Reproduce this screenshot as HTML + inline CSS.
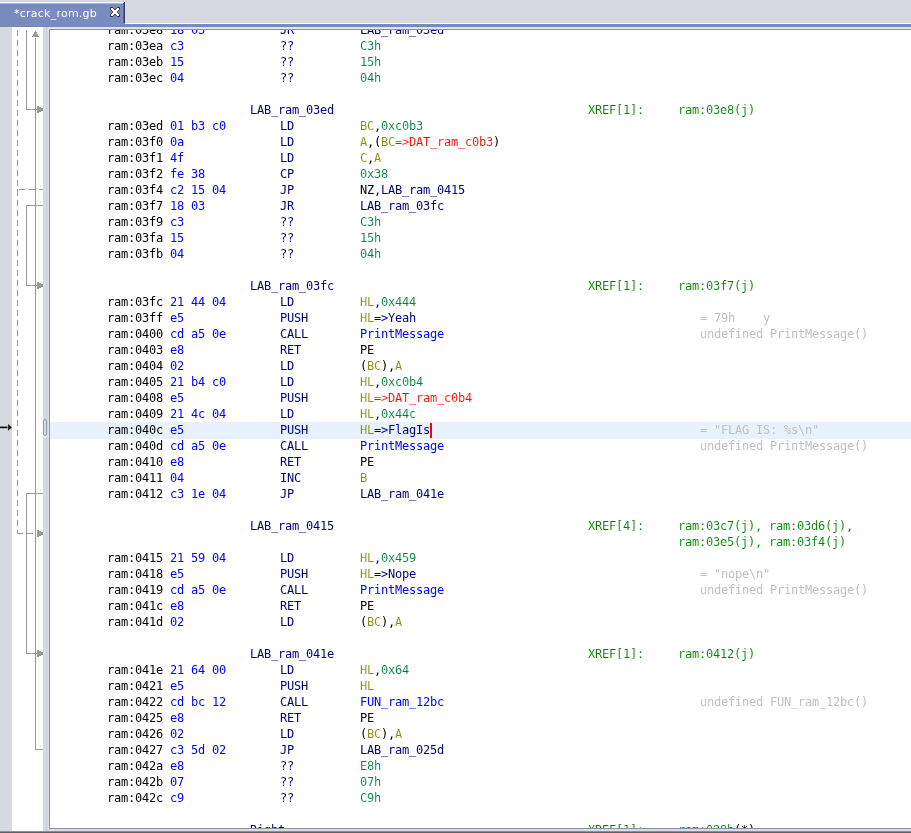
<!DOCTYPE html>
<html>
<head>
<meta charset="utf-8">
<title>crack_rom.gb</title>
<style>
html,body{margin:0;padding:0;}
body{width:911px;height:833px;overflow:hidden;background:#d6d9df;position:relative;font-family:"DejaVu Sans Mono","Liberation Mono",monospace;}
#tab{will-change:transform;position:absolute;left:0;top:2px;width:125px;height:25px;background:#7a8cbf;}
#tab .hi{position:absolute;left:0;top:0;width:124px;height:1px;background:#f3f7fe;}
#tab .hi2{position:absolute;left:0;top:1px;width:123px;height:1px;background:#a4baec;}
#tab .rb1{position:absolute;left:123px;top:1px;width:1px;height:20px;background:#596994;}
#tab .rb2{position:absolute;left:124px;top:0;width:1px;height:21px;background:#2e3a5c;}
#tab .t{position:absolute;left:14px;top:4px;font:11px/16px "DejaVu Sans","Liberation Sans",sans-serif;letter-spacing:0.24px;color:#fff;white-space:pre;}
#tabline-w{position:absolute;left:125px;top:23px;width:786px;height:1px;background:#fff;}
#tabline-b{position:absolute;left:0;top:24px;width:911px;height:3px;background:linear-gradient(to bottom,#7a8cbf 0,#7a8cbf 2px,#6f87bd 2px,#6f87bd 3px);}
#margin{position:absolute;left:12px;top:27px;width:31px;height:804px;background:#fff;}
#divider{position:absolute;left:43px;top:27px;width:6px;height:804px;background:linear-gradient(to right,#d4d7dd 0,#d4d7dd 1px,#d6d9df 1px,#d6d9df 3px,#cbced4 3px,#cbced4 4px,#d5d8de 4px,#d5d8de 5px,#dee0e6 5px,#dee0e6 6px);}
#topband{position:absolute;left:48px;top:27px;width:863px;height:2px;background:#e1e3e8;}
#botband{position:absolute;left:48px;top:829px;width:863px;height:3px;background:#d9dce2;}
#listing{will-change:transform;position:absolute;left:49px;top:29px;width:862px;height:798px;background:#fff;border-left:1px solid #8f94a2;border-top:1px solid #8d919e;border-bottom:1px solid #8d919e;overflow:hidden;}
#bottom{position:absolute;left:0;top:831px;width:911px;height:2px;background:linear-gradient(to bottom,#8b8e95 0,#8b8e95 1px,#5f6166 1px,#5f6166 2px);}
.row{position:absolute;left:0;width:861px;height:16px;font-size:12px;line-height:16px;letter-spacing:-0.224px;white-space:pre;}
.row.hl{background:#e8f2fe;height:17px;}
.c{position:absolute;top:0;}
.a{left:57px;color:#000;}
.b{left:120px;color:#00f;}
.m{left:230px;color:#000080;}
.o{left:310px;}
.lb{left:200px;color:#000080;}
.xh{left:538px;color:#008000;}
.xr{left:628px;}
.cm{left:650px;color:#c0c0c0;}
.r{color:#8c8c14;}
.r,.s,.e,.g,.xh{-webkit-text-stroke:0.1px #fff;}
.hl .r{-webkit-text-stroke-color:#e8f2fe;}
.s{color:#008040;}
.k{color:#000;}
.l{color:#000080;}
.f{color:#00f;}
.e{color:#f00;}
.g{color:#008000;}
.cur{position:absolute;left:380px;top:1px;width:2px;height:15px;background:#f00;}
</style>
</head>
<body>
<div id="tab"><div class="hi"></div><div class="hi2"></div><div class="rb1"></div><div class="rb2"></div><div class="t">*crack_rom.gb</div>
<svg style="position:absolute;left:110px;top:5px" width="10" height="10" viewBox="0 0 10 10"><path d="M0.5 0.5 L2.7 0.5 L5 2.9 L7.3 0.5 L9.5 0.5 L9.5 2.7 L7.1 5 L9.5 7.3 L9.5 9.5 L7.3 9.5 L5 7.1 L2.7 9.5 L0.5 9.5 L0.5 7.3 L2.9 5 L0.5 2.7 Z" fill="#fff" stroke="#2b2b2b" stroke-width="1" stroke-linejoin="miter"/></svg>
</div>
<div id="tabline-w"></div>
<div id="tabline-b"></div>
<div id="margin"></div>
<div id="divider"></div>
<div id="topband"></div>
<div id="botband"></div>
<svg id="flow" style="position:absolute;left:0;top:27px" width="50" height="806" viewBox="0 27 50 806" shape-rendering="crispEdges">
<g stroke="#999" stroke-width="1" fill="none">
<!-- dashed conditional jump 03f4 -> 0415 -->
<path d="M17.5 30 V533.5" stroke-dasharray="6 4"/>
<path d="M19 189.5 H43" stroke-dasharray="6 4"/>
<path d="M17 189.5 H18"/>
<path d="M17 533.5 H23 M26 533.5 H33"/>
<!-- 03e8 -> 03ed (from above) -->
<path d="M26.5 30 V109.5 H37"/>
<!-- 03f7 -> 03fc -->
<path d="M43 205.5 H26.5 V285.5 H37"/>
<!-- 0412 -> 041e -->
<path d="M43 493.5 H26.5 V653.5 H37"/>
<!-- 0427 -> up -->
<path d="M43 749.5 H35.5 V38"/>
</g>
<g fill="#999" stroke="none" shape-rendering="crispEdges">
<path d="M35 31 h1 v1 h1 v2 h1 v2 h1 v1 h-7 v-1 h1 v-2 h1 v-2 h1 Z"/>
<path d="M37 106 h2 v1 h2 v1 h2 v3 h-2 v1 h-2 v1 h-2 Z"/>
<path d="M37 282 h2 v1 h2 v1 h2 v3 h-2 v1 h-2 v1 h-2 Z"/>
<path d="M37 530 h2 v1 h2 v1 h2 v3 h-2 v1 h-2 v1 h-2 Z"/>
<path d="M37 650 h2 v1 h2 v1 h2 v3 h-2 v1 h-2 v1 h-2 Z"/>
</g>
<!-- cursor marker -->
<path d="M0 427.4 H8.5" stroke="#000" stroke-width="1.6" fill="none" shape-rendering="geometricPrecision"/>
<path d="M7.8 423.3 L12.2 427.4 L7.8 431.5 Z" fill="#000" stroke="#fff" stroke-width="0.6" shape-rendering="geometricPrecision"/>
<!-- divider handle -->
<path d="M43.6 435.2 Q43.6 437.6 45 437.6 Q46.4 437.6 46.4 435.2" fill="none" stroke="#fff" stroke-width="1" shape-rendering="geometricPrecision"/>
<rect x="43.5" y="419.5" width="3" height="16" rx="1.5" ry="1.5" fill="#d9dce3" stroke="#8e95a9" stroke-width="1" shape-rendering="geometricPrecision"/>
</svg>
<div id="listing">
<div class="row" style="top:-8px"><span class="c a">ram:03e8</span><span class="c b">18 03</span><span class="c m">JR</span><span class="c o"><span class="l">LAB_ram_03ed</span></span></div>
<div class="row" style="top:8px"><span class="c a">ram:03ea</span><span class="c b">c3</span><span class="c m">??</span><span class="c o"><span class="s">C3h</span></span></div>
<div class="row" style="top:24px"><span class="c a">ram:03eb</span><span class="c b">15</span><span class="c m">??</span><span class="c o"><span class="s">15h</span></span></div>
<div class="row" style="top:40px"><span class="c a">ram:03ec</span><span class="c b">04</span><span class="c m">??</span><span class="c o"><span class="s">04h</span></span></div>
<div class="row" style="top:72px"><span class="c lb">LAB_ram_03ed</span><span class="c xh">XREF[1]:</span><span class="c xr"><span class="g">ram:03e8(j)</span></span></div>
<div class="row" style="top:88px"><span class="c a">ram:03ed</span><span class="c b">01 b3 c0</span><span class="c m">LD</span><span class="c o"><span class="r">BC</span><span class="k">,</span><span class="s">0xc0b3</span></span></div>
<div class="row" style="top:104px"><span class="c a">ram:03f0</span><span class="c b">0a</span><span class="c m">LD</span><span class="c o"><span class="r">A</span><span class="k">,(</span><span class="r">BC</span><span class="e">=&gt;DAT_ram_c0b3</span><span class="k">)</span></span></div>
<div class="row" style="top:120px"><span class="c a">ram:03f1</span><span class="c b">4f</span><span class="c m">LD</span><span class="c o"><span class="r">C</span><span class="k">,</span><span class="r">A</span></span></div>
<div class="row" style="top:136px"><span class="c a">ram:03f2</span><span class="c b">fe 38</span><span class="c m">CP</span><span class="c o"><span class="s">0x38</span></span></div>
<div class="row" style="top:152px"><span class="c a">ram:03f4</span><span class="c b">c2 15 04</span><span class="c m">JP</span><span class="c o"><span class="k">NZ,</span><span class="l">LAB_ram_0415</span></span></div>
<div class="row" style="top:168px"><span class="c a">ram:03f7</span><span class="c b">18 03</span><span class="c m">JR</span><span class="c o"><span class="l">LAB_ram_03fc</span></span></div>
<div class="row" style="top:184px"><span class="c a">ram:03f9</span><span class="c b">c3</span><span class="c m">??</span><span class="c o"><span class="s">C3h</span></span></div>
<div class="row" style="top:200px"><span class="c a">ram:03fa</span><span class="c b">15</span><span class="c m">??</span><span class="c o"><span class="s">15h</span></span></div>
<div class="row" style="top:216px"><span class="c a">ram:03fb</span><span class="c b">04</span><span class="c m">??</span><span class="c o"><span class="s">04h</span></span></div>
<div class="row" style="top:248px"><span class="c lb">LAB_ram_03fc</span><span class="c xh">XREF[1]:</span><span class="c xr"><span class="g">ram:03f7(j)</span></span></div>
<div class="row" style="top:264px"><span class="c a">ram:03fc</span><span class="c b">21 44 04</span><span class="c m">LD</span><span class="c o"><span class="r">HL</span><span class="k">,</span><span class="s">0x444</span></span></div>
<div class="row" style="top:280px"><span class="c a">ram:03ff</span><span class="c b">e5</span><span class="c m">PUSH</span><span class="c o"><span class="r">HL</span><span class="l">=&gt;Yeah</span></span><span class="c cm">= 79h    y</span></div>
<div class="row" style="top:296px"><span class="c a">ram:0400</span><span class="c b">cd a5 0e</span><span class="c m">CALL</span><span class="c o"><span class="f">PrintMessage</span></span><span class="c cm">undefined PrintMessage()</span></div>
<div class="row" style="top:312px"><span class="c a">ram:0403</span><span class="c b">e8</span><span class="c m">RET</span><span class="c o"><span class="k">PE</span></span></div>
<div class="row" style="top:328px"><span class="c a">ram:0404</span><span class="c b">02</span><span class="c m">LD</span><span class="c o"><span class="k">(</span><span class="r">BC</span><span class="k">),</span><span class="r">A</span></span></div>
<div class="row" style="top:344px"><span class="c a">ram:0405</span><span class="c b">21 b4 c0</span><span class="c m">LD</span><span class="c o"><span class="r">HL</span><span class="k">,</span><span class="s">0xc0b4</span></span></div>
<div class="row" style="top:360px"><span class="c a">ram:0408</span><span class="c b">e5</span><span class="c m">PUSH</span><span class="c o"><span class="r">HL</span><span class="e">=&gt;DAT_ram_c0b4</span></span></div>
<div class="row" style="top:376px"><span class="c a">ram:0409</span><span class="c b">21 4c 04</span><span class="c m">LD</span><span class="c o"><span class="r">HL</span><span class="k">,</span><span class="s">0x44c</span></span></div>
<div class="row hl" style="top:392px"><span class="c a">ram:040c</span><span class="c b">e5</span><span class="c m">PUSH</span><span class="c o"><span class="r">HL</span><span class="l">=&gt;FlagIs</span></span><span class="c cm">= "FLAG IS: %s\n"</span><span class="cur"></span></div>
<div class="row" style="top:408px"><span class="c a">ram:040d</span><span class="c b">cd a5 0e</span><span class="c m">CALL</span><span class="c o"><span class="f">PrintMessage</span></span><span class="c cm">undefined PrintMessage()</span></div>
<div class="row" style="top:424px"><span class="c a">ram:0410</span><span class="c b">e8</span><span class="c m">RET</span><span class="c o"><span class="k">PE</span></span></div>
<div class="row" style="top:440px"><span class="c a">ram:0411</span><span class="c b">04</span><span class="c m">INC</span><span class="c o"><span class="r">B</span></span></div>
<div class="row" style="top:456px"><span class="c a">ram:0412</span><span class="c b">c3 1e 04</span><span class="c m">JP</span><span class="c o"><span class="l">LAB_ram_041e</span></span></div>
<div class="row" style="top:488px"><span class="c lb">LAB_ram_0415</span><span class="c xh">XREF[4]:</span><span class="c xr"><span class="g">ram:03c7(j), ram:03d6(j),</span></span></div>
<div class="row" style="top:504px"><span class="c xr"><span class="g">ram:03e5(j), ram:03f4(j)</span></span></div>
<div class="row" style="top:520px"><span class="c a">ram:0415</span><span class="c b">21 59 04</span><span class="c m">LD</span><span class="c o"><span class="r">HL</span><span class="k">,</span><span class="s">0x459</span></span></div>
<div class="row" style="top:536px"><span class="c a">ram:0418</span><span class="c b">e5</span><span class="c m">PUSH</span><span class="c o"><span class="r">HL</span><span class="l">=&gt;Nope</span></span><span class="c cm">= "nope\n"</span></div>
<div class="row" style="top:552px"><span class="c a">ram:0419</span><span class="c b">cd a5 0e</span><span class="c m">CALL</span><span class="c o"><span class="f">PrintMessage</span></span><span class="c cm">undefined PrintMessage()</span></div>
<div class="row" style="top:568px"><span class="c a">ram:041c</span><span class="c b">e8</span><span class="c m">RET</span><span class="c o"><span class="k">PE</span></span></div>
<div class="row" style="top:584px"><span class="c a">ram:041d</span><span class="c b">02</span><span class="c m">LD</span><span class="c o"><span class="k">(</span><span class="r">BC</span><span class="k">),</span><span class="r">A</span></span></div>
<div class="row" style="top:616px"><span class="c lb">LAB_ram_041e</span><span class="c xh">XREF[1]:</span><span class="c xr"><span class="g">ram:0412(j)</span></span></div>
<div class="row" style="top:632px"><span class="c a">ram:041e</span><span class="c b">21 64 00</span><span class="c m">LD</span><span class="c o"><span class="r">HL</span><span class="k">,</span><span class="s">0x64</span></span></div>
<div class="row" style="top:648px"><span class="c a">ram:0421</span><span class="c b">e5</span><span class="c m">PUSH</span><span class="c o"><span class="r">HL</span></span></div>
<div class="row" style="top:664px"><span class="c a">ram:0422</span><span class="c b">cd bc 12</span><span class="c m">CALL</span><span class="c o"><span class="f">FUN_ram_12bc</span></span><span class="c cm">undefined FUN_ram_12bc()</span></div>
<div class="row" style="top:680px"><span class="c a">ram:0425</span><span class="c b">e8</span><span class="c m">RET</span><span class="c o"><span class="k">PE</span></span></div>
<div class="row" style="top:696px"><span class="c a">ram:0426</span><span class="c b">02</span><span class="c m">LD</span><span class="c o"><span class="k">(</span><span class="r">BC</span><span class="k">),</span><span class="r">A</span></span></div>
<div class="row" style="top:712px"><span class="c a">ram:0427</span><span class="c b">c3 5d 02</span><span class="c m">JP</span><span class="c o"><span class="l">LAB_ram_025d</span></span></div>
<div class="row" style="top:728px"><span class="c a">ram:042a</span><span class="c b">e8</span><span class="c m">??</span><span class="c o"><span class="s">E8h</span></span></div>
<div class="row" style="top:744px"><span class="c a">ram:042b</span><span class="c b">07</span><span class="c m">??</span><span class="c o"><span class="s">07h</span></span></div>
<div class="row" style="top:760px"><span class="c a">ram:042c</span><span class="c b">c9</span><span class="c m">??</span><span class="c o"><span class="s">C9h</span></span></div>
<div class="row" style="top:792px"><span class="c lb">Right</span><span class="c xh">XREF[1]:</span><span class="c xr"><span class="g">ram:028b</span><span class="k">(*)</span></span></div>
</div>
<div id="bottom"></div>
</body>
</html>
